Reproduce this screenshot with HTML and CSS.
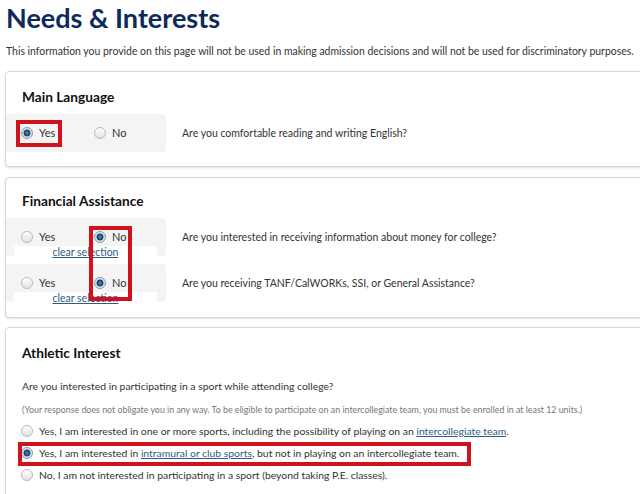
FILE: index.html
```html
<!DOCTYPE html>
<html lang="en">
<head>
<meta charset="utf-8">
<title>Needs &amp; Interests</title>
<link rel="stylesheet" href="styles.css">
</head>
<body>
<main class="page">
  <h1 class="title">Needs &amp; Interests</h1>
  <p class="intro">This information you provide on this page will not be used in making admission decisions and will not be used for discriminatory purposes.</p>

  <section class="card card-lang">
    <h2 class="card-title">Main Language</h2>
    <div class="q-row">
      <div class="choice-box">
        <div class="choices">
          <label class="choice choice-yes"><span class="radio checked"></span>Yes</label>
          <label class="choice"><span class="radio"></span>No</label>
        </div>
        <span class="mark mark-lang"></span>
      </div>
      <p class="q-text">Are you comfortable reading and writing English?</p>
    </div>
  </section>

  <section class="card card-fin">
    <h2 class="card-title">Financial Assistance</h2>
    <div class="q-list">
      <div class="q-row">
        <div class="choice-box">
          <div class="choices">
            <label class="choice choice-yes"><span class="radio"></span>Yes</label>
            <label class="choice"><span class="radio checked"></span>No</label>
          </div>
          <a class="clear" href="#">clear selection</a>
        </div>
        <p class="q-text">Are you interested in receiving information about money for college?</p>
      </div>
      <div class="q-row">
        <div class="choice-box">
          <div class="choices">
            <label class="choice choice-yes"><span class="radio"></span>Yes</label>
            <label class="choice"><span class="radio checked"></span>No</label>
          </div>
          <a class="clear" href="#">clear selection</a>
        </div>
        <p class="q-text">Are you receiving TANF/CalWORKs, SSI, or General Assistance?</p>
      </div>
    </div>
    <span class="mark mark-fin"></span>
  </section>

  <section class="card card-ath">
    <h2 class="card-title">Athletic Interest</h2>
    <div class="ath-body">
      <p class="ath-q">Are you interested in participating in a sport while attending college?</p>
      <p class="ath-note">(Your response does not obligate you in any way. To be eligible to participate on an intercollegiate team, you must be enrolled in at least 12 units.)</p>
      <ul class="options">
        <li class="option"><span class="radio"></span><span>Yes, I am interested in one or more sports, including the possibility of playing on an <a href="#">intercollegiate team</a>.</span></li>
        <li class="option option-marked"><span class="radio checked"></span><span>Yes, I am interested in <a href="#">intramural or club sports</a>, but not in playing on an intercollegiate team.</span><span class="mark mark-ath"></span></li>
        <li class="option"><span class="radio"></span><span>No, I am not interested in participating in a sport (beyond taking P.E. classes).</span></li>
      </ul>
    </div>
  </section>
</main>
</body>
</html>
```

FILE: styles.css
```css
* { box-sizing: border-box; }

html, body {
  margin: 0;
  padding: 0;
  background: #ffffff;
}

body {
  overflow: hidden;
  font-family: Lato, "Open Sans", sans-serif;
  color: #333333;
}

.page {
  display: flex;
  flex-direction: column;
}

.title {
  margin: 2px 0 0 6px;
  font-size: 27px;
  line-height: 32px;
  font-weight: 700;
  color: #0e2a5a;
}

.intro {
  margin: 10px 0 0 6px;
  font-size: 10.45px;
  line-height: 14px;
  color: #333;
  white-space: nowrap;
}

.card {
  position: relative;
  margin: 13px -12px 0 5px;
  border: 1px solid #d6d6d6;
  border-radius: 4px;
  box-shadow: 0 1px 2px rgba(0,0,0,0.12);
  padding: 14px 0 14px 0;
  background: #fff;
}

.card-fin {
  margin-top: 10px;
  padding-top: 12px;
  padding-bottom: 15px;
}

.card-ath {
  margin-top: 9px;
  padding-top: 14px;
}

.card-title {
  margin: 0 0 6px 16px;
  font-size: 13.7px;
  line-height: 22px;
  font-weight: 700;
  color: #111;
}

.q-list {
  display: flex;
  flex-direction: column;
  gap: 8px;
}

.q-row {
  display: flex;
  align-items: flex-start;
  gap: 16px;
}

.choice-box {
  position: relative;
  width: 160px;
  height: 38px;
  flex: none;
  background: #f4f4f4;
  border-radius: 0 4px 4px 0;
  padding-top: 11px;
  display: flex;
  flex-direction: column;
}

.choices {
  display: flex;
  height: 16px;
  padding-left: 15px;
}

.choice {
  display: flex;
  align-items: center;
  gap: 6px;
  font-size: 11px;
  line-height: 16px;
  color: #333;
}

.choice-yes { width: 73px; }

.radio {
  width: 12px;
  height: 12px;
  flex: none;
  border-radius: 50%;
  border: 1px solid #b9b9b9;
  background: linear-gradient(#ffffff, #e1e1e1);
}

.radio.checked {
  border-color: #8a9aa8;
  background: radial-gradient(circle, #5d9bd0 0, #2a6598 1.5px, #183c60 3px, #c9d4de 3.8px, #eef1f4 6px);
}

.clear {
  display: block;
  margin: 1px 9px 0 8px;
  height: 13px;
  line-height: 13px;
  background: #fff;
  text-align: center;
  font-size: 10.5px;
  color: #2d5c86;
  text-decoration: underline;
}

.q-text {
  margin: 11px 0 0 0;
  font-size: 10.5px;
  line-height: 16px;
  color: #333;
}

.mark {
  position: absolute;
  border: 4px solid #d0121e;
  pointer-events: none;
}

.mark-lang {
  left: 10px;
  top: 6px;
  width: 46px;
  height: 27px;
}

.mark-fin {
  left: 83px;
  top: 48px;
  width: 43px;
  height: 75px;
}

.ath-body {
  padding: 0 0 0 16px;
}

.card-ath .card-title { margin-bottom: 14px; }

.ath-q {
  margin: 0;
  font-size: 10.4px;
  line-height: 16px;
  color: #333;
}

.ath-note {
  margin: 8px 0 0 0;
  font-size: 8.85px;
  line-height: 16px;
  color: #777;
  white-space: nowrap;
}

.options {
  list-style: none;
  margin: 2px 0 0 -1px;
  padding: 0;
}

.option {
  position: relative;
  display: flex;
  align-items: center;
  gap: 6px;
  height: 22px;
  font-size: 10.4px;
  color: #333;
  white-space: nowrap;
}

.option a {
  color: #2d5c86;
  text-decoration: underline;
}

.mark-ath {
  left: -3px;
  top: 0;
  width: 453px;
  height: 24px;
}
```
